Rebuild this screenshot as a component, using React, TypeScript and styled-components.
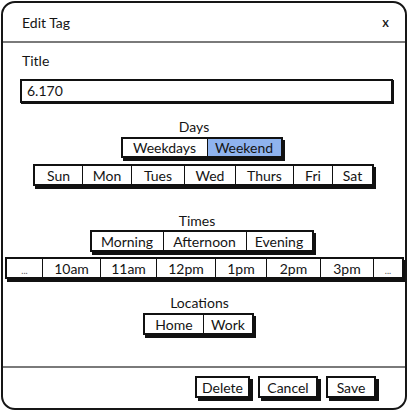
import styled, { createGlobalStyle } from "styled-components";

/*
    Edit Tag 대화상자 (와이어프레임 스타일)
*/
const GlobalStyle = createGlobalStyle`
    body {
        margin: 0;
        background: #fff;
        font-family: Lato, "Open Sans", "Liberation Sans", sans-serif;
        color: #141414;
    }
`;

const Page = styled.div`
    width: 409px;
    height: 412px;
    padding: 1px;
    box-sizing: border-box;
`;

const Frame = styled.div`
    width: 406px;
    height: 409px;
    box-sizing: border-box;
    border: 2px solid #161616;
    border-radius: 14px;
    display: flex;
    flex-direction: column;
    overflow: hidden;
`;

const Header = styled.div`
    height: 38px;
    display: flex;
    align-items: center;
    justify-content: space-between;
    padding: 0 16px 0 19px;
    font-size: 14px;
`;

const Close = styled.span`
    font-size: 13px;
    font-weight: 600;
`;

const Divider = styled.div`
    height: 2px;
    background: #7a7a7a;
    flex-shrink: 0;
`;

const Body = styled.div`
    flex: 1;
    padding: 10px 18px 0 17px;
    display: flex;
    flex-direction: column;
`;

const FieldLabel = styled.div`
    font-size: 14px;
    line-height: 16px;
    margin-left: 2px;
`;

const TitleInput = styled.div`
    margin-top: 10px;
    width: 373px;
    height: 24px;
    flex-shrink: 0;
    box-sizing: border-box;
    border: 2px solid #111;
    box-shadow: 1px 1px 0 #111;
    font-size: 14px;
    line-height: 20px;
    padding-left: 5px;
`;

const Section = styled.div<{ $top: number }>`
    margin-top: ${(p) => p.$top}px;
    display: flex;
    flex-direction: column;
    align-items: center;
`;

const SectionLabel = styled.div<{ $shift: number }>`
    font-size: 14px;
    line-height: 16px;
    margin-right: ${(p) => p.$shift}px;
`;

const Segmented = styled.div<{ $top: number; $shift?: number }>`
    margin-top: ${(p) => p.$top}px;
    margin-left: ${(p) => p.$shift ?? 0}px;
    display: flex;
    border: 2px solid #111;
    box-shadow: 2px 3px 0 #111;
    background: #fff;
`;

const Segment = styled.div<{ $w: number; $on?: boolean; $h: number }>`
    width: ${(p) => p.$w}px;
    height: ${(p) => p.$h}px;
    box-sizing: border-box;
    display: flex;
    align-items: center;
    justify-content: center;
    font-size: 14px;
    background: ${(p) => (p.$on ? "#8fb3ee" : "#fff")};
    & + & {
        border-left: 1.5px solid #111;
    }
`;

const Dots = styled.span`
    font-size: 9px;
    color: #555;
    padding-top: 4px;
`;

const Footer = styled.div`
    height: 38px;
    display: flex;
    align-items: center;
    justify-content: flex-end;
    gap: 8px;
    padding: 0 29px 2px 0;
`;

const Button = styled.div<{ $w: number }>`
    width: ${(p) => p.$w}px;
    height: 22px;
    box-sizing: border-box;
    border: 2px solid #111;
    box-shadow: 3px 3px 0 #111;
    display: flex;
    align-items: center;
    justify-content: center;
    font-size: 14px;
`;

type Item = { label: string; w: number; on?: boolean };

const kinds: Item[] = [
    { label: "Weekdays", w: 84 },
    { label: "Weekend", w: 74, on: true },
];

const days: Item[] = [
    { label: "Sun", w: 47 },
    { label: "Mon", w: 49 },
    { label: "Tues", w: 53 },
    { label: "Wed", w: 51 },
    { label: "Thurs", w: 58 },
    { label: "Fri", w: 39 },
    { label: "Sat", w: 40 },
];

const parts: Item[] = [
    { label: "Morning", w: 71 },
    { label: "Afternoon", w: 83 },
    { label: "Evening", w: 66 },
];

const hours: Item[] = [
    { label: "...", w: 35 },
    { label: "10am", w: 58 },
    { label: "11am", w: 56 },
    { label: "12pm", w: 59 },
    { label: "1pm", w: 51 },
    { label: "2pm", w: 54 },
    { label: "3pm", w: 53 },
    { label: "...", w: 29 },
];

const places: Item[] = [
    { label: "Home", w: 58 },
    { label: "Work", w: 49 },
];

const renderItems = (items: Item[], h: number) =>
    items.map((it, i) => (
        <Segment key={i} $w={it.w} $h={h} $on={it.on}>
            {it.label === "..." ? <Dots>...</Dots> : it.label}
        </Segment>
    ));

const App = () => {
    return (
        <>
            <GlobalStyle />
            <Page>
                <Frame>
                    <Header>
                        <span>Edit Tag</span>
                        <Close>x</Close>
                    </Header>
                    <Divider />
                    <Body>
                        <FieldLabel>Title</FieldLabel>
                        <TitleInput>6.170</TitleInput>

                        <Section $top={16}>
                            <SectionLabel $shift={19}>Days</SectionLabel>
                            <Segmented $top={2} $shift={-4}>{renderItems(kinds, 17)}</Segmented>
                            <Segmented $top={6}>{renderItems(days, 18)}</Segmented>
                        </Section>

                        <Section $top={27}>
                            <SectionLabel $shift={13}>Times</SectionLabel>
                            <Segmented $top={1} $shift={-4}>{renderItems(parts, 18)}</Segmented>
                            <Segmented $top={5} $shift={2}>{renderItems(hours, 18)}</Segmented>
                        </Section>

                        <Section $top={16}>
                            <SectionLabel $shift={8}>Locations</SectionLabel>
                            <Segmented $top={2} $shift={-10}>{renderItems(places, 18)}</Segmented>
                        </Section>
                    </Body>
                    <Divider />
                    <Footer>
                        <Button $w={55}>Delete</Button>
                        <Button $w={60}>Cancel</Button>
                        <Button $w={50}>Save</Button>
                    </Footer>
                </Frame>
            </Page>
        </>
    );
};

export default App;
